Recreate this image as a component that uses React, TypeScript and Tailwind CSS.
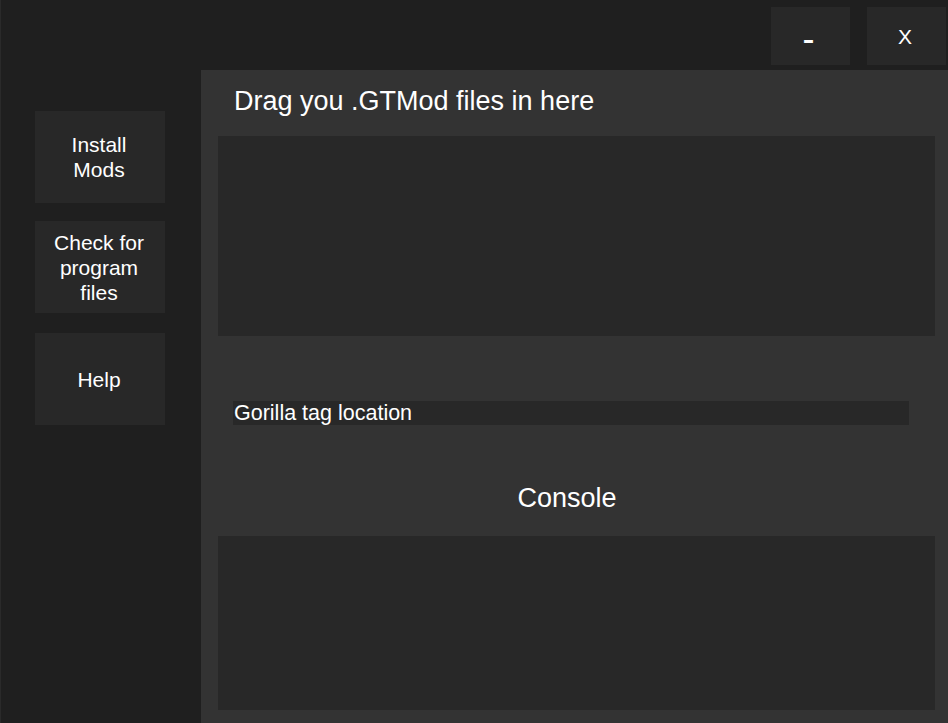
import React from "react";

const font = { fontFamily: '"Liberation Sans", Arial, sans-serif' };

function SideButton({ lines, className = "" }: { lines: string[]; className?: string }) {
  return (
    <div
      className={`w-[130px] h-[92px] bg-[#282828] flex flex-col items-center justify-center text-[21px] leading-[25px] text-white text-center pr-[2px] ${className}`}
    >
      {lines.map((l) => (
        <div key={l}>{l}</div>
      ))}
    </div>
  );
}

export default function App() {
  return (
    <div
      className="w-[948px] h-[723px] bg-[#1f1f1f] flex flex-col overflow-hidden border-l border-[#2a2a2a] text-white"
      style={font}
    >
      <div className="h-[70px] flex justify-end items-start pt-[7px] pr-[2px] gap-[17px]">
        <div className="w-[79px] h-[58px] bg-[#282828] flex items-center justify-center pr-[4px]">
          <span className="text-[36px] leading-[36px] mt-[6px]">-</span>
        </div>
        <div className="w-[79px] h-[58px] bg-[#282828] flex items-center justify-center pr-[3px]">
          <span className="text-[21px] leading-[25px]">X</span>
        </div>
      </div>
      <div className="flex flex-1">
        <div className="w-[200px] flex flex-col pl-[34px] pt-[41px]">
          <SideButton lines={["Install", "Mods"]} />
          <SideButton lines={["Check for", "program", "files"]} className="mt-[18px]" />
          <SideButton lines={["Help"]} className="mt-[20px]" />
        </div>
        <div className="flex-1 bg-[#333333] flex flex-col">
          <div className="mt-[18px] h-[27px] text-[27px] leading-[27px] pl-[33px] whitespace-nowrap">
            Drag you .GTMod files in here
          </div>
          <div className="mt-[21px] ml-[17px] mr-[13px] h-[200px] bg-[#282828]" />
          <div className="mt-[65px] ml-[32px] w-[676px] h-[24px] bg-[#282828] text-[21.5px] leading-[24px] pl-[1px] whitespace-nowrap">
            Gorilla tag location
          </div>
          <div className="mt-[60px] h-[26px] text-[27px] leading-[26px] text-center pr-[15px]">Console</div>
          <div className="mt-[25px] ml-[17px] mr-[13px] h-[174px] bg-[#282828]" />
        </div>
      </div>
    </div>
  );
}
